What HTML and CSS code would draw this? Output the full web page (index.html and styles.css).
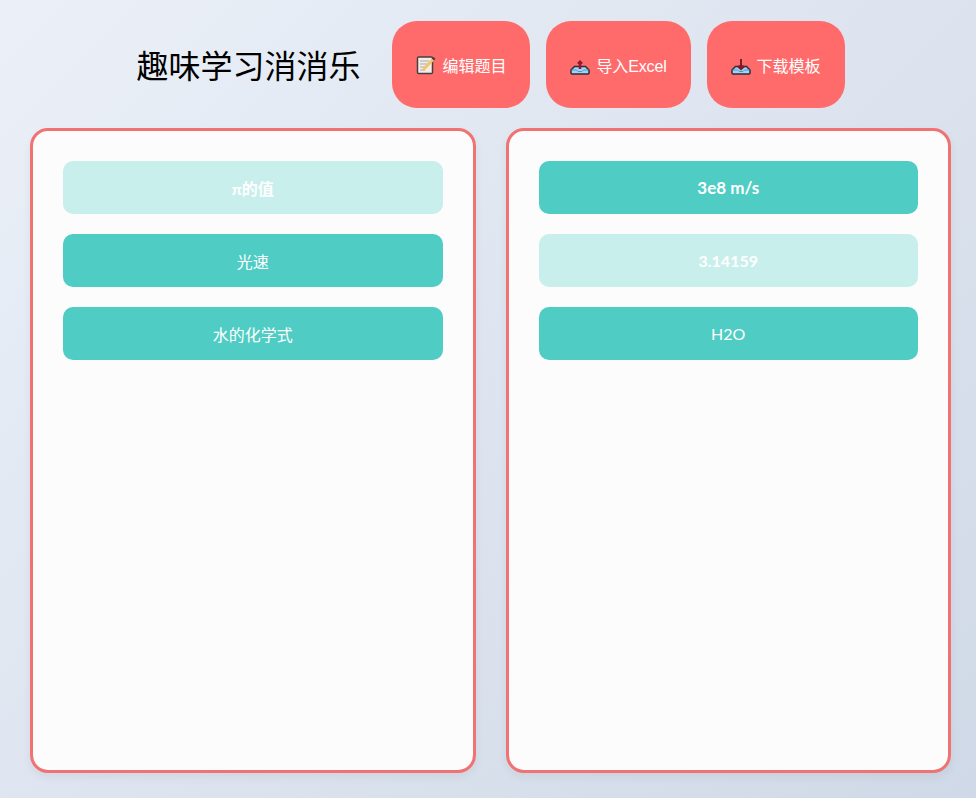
FILE: index.html
```html
<!DOCTYPE html>
<html lang="zh-CN">
<head>
    <meta charset="UTF-8">
    <meta name="viewport" content="width=device-width, initial-scale=1.0">
    <title>趣味学习消消乐</title>
    <link rel="stylesheet" href="styles.css">
</head>
<body>
    <div class="header">
        <h1 class="title">趣味学习消消乐</h1>
        <button class="btn" type="button">
            <svg class="icon" viewBox="0 0 20 20">
                <rect x="1.500" y="2" width="15" height="16.500" rx="1" fill="#f1eee8" stroke="#4a3f3f" stroke-width="1.500"/>
                <path d="M4 6h9M4 9h8M4 12h6M4 15h5" stroke="#a9a9a9" stroke-width="1.200"/>
                <path d="M6 16l1.200-3.500L16 3.500l2 2-8.500 9z" fill="#f2c46d"/>
                <path d="M16 3.500l2 2 1.500-1.800-1.700-1.700z" fill="#4a3f3f"/>
            </svg>
            <span>编辑题目</span>
        </button>
        <button class="btn btn-import" type="button">
            <svg class="icon" viewBox="0 0 20 20">
                <path d="M1 15l3.500-3.500h11L19 15v3a1 1 0 0 1-1 1H2a1 1 0 0 1-1-1z" fill="#a5d3f4" stroke="#2b2f3a" stroke-width="1.500"/>
                <path d="M1.500 15h5l1.500 1.500h4l1.500-1.500h5" fill="none" stroke="#4a97d0" stroke-width="1"/>
                <path d="M10 5l3 3-1.700 1.200V14H8.700V9.200L7 8z" fill="#8e1b2e"/>
            </svg>
            <span>导入Excel</span>
        </button>
        <button class="btn" type="button">
            <svg class="icon" viewBox="0 0 20 20">
                <path d="M1 15l3.500-3.500h11L19 15v3a1 1 0 0 1-1 1H2a1 1 0 0 1-1-1z" fill="#a5d3f4" stroke="#2b2f3a" stroke-width="1.500"/>
                <path d="M1.500 15h5l1.500 1.500h4l1.500-1.500h5" fill="none" stroke="#4a97d0" stroke-width="1"/>
                <path d="M9 4h2v6l3.500 1.500L10 15.500 5.500 11.500 9 10z" fill="#7a1c2b"/>
            </svg>
            <span>下载模板</span>
        </button>
    </div>

    <div class="board">
        <div class="panel">
            <div class="card matched">π的值</div>
            <div class="card thin">光速</div>
            <div class="card thin">水的化学式</div>
        </div>
        <div class="panel">
            <div class="card">3e8 m/s</div>
            <div class="card matched">3.14159</div>
            <div class="card thin">H2O</div>
        </div>
    </div>
</body>
</html>
```

FILE: styles.css
```css
* {
    margin: 0;
    padding: 0;
    box-sizing: border-box;
}

html,
body {
    height: 100%;
}

body {
    display: flex;
    flex-direction: column;
    gap: 20px;
    padding: 21px 25px 25px 30px;
    font-family: "Liberation Sans", "Noto Sans CJK SC", sans-serif;
    background: linear-gradient(135deg, #ebf0f8 0%, #d0d9e7 100%);
    overflow: hidden;
}

.header {
    display: flex;
    justify-content: center;
    align-items: center;
    gap: 16px;
}

.title {
    margin-right: 16px;
    font-size: 32px;
    font-weight: 400;
    line-height: 1.2;
    color: #000;
    font-family: "Noto Sans CJK SC", sans-serif;
}

.btn {
    display: flex;
    align-items: center;
    gap: 6px;
    height: 87px;
    padding: 0 24px;
    border: none;
    border-radius: 25px;
    background-color: #ff6b6b;
    color: white;
    font-family: inherit;
    font-size: 16px;
    cursor: pointer;
}

.btn-import {
    letter-spacing: -0.15px;
}

.icon {
    width: 20px;
    height: 20px;
    flex-shrink: 0;
}

.board {
    flex: 1;
    display: grid;
    grid-template-columns: 1fr 1fr;
    gap: 30px;
    min-height: 0;
}

.panel {
    display: flex;
    flex-direction: column;
    gap: 20px;
    padding: 30px;
    background-color: #fcfcfd;
    border: 3px solid #f07272;
    border-radius: 18px;
    box-shadow: 0 4px 10px rgba(0, 0, 0, 0.06);
}

.card {
    display: flex;
    justify-content: center;
    align-items: center;
    height: 53px;
    border-radius: 10px;
    background-color: #4fcdc4;
    color: white;
    font-family: "Lato", "Noto Sans CJK SC", sans-serif;
    font-size: 17px;
    font-weight: 700;
}

.card.thin {
    font-size: 16px;
    font-weight: 400;
}

.card.matched {
    background-color: #c8efec;
    font-size: 16px;
}
```
